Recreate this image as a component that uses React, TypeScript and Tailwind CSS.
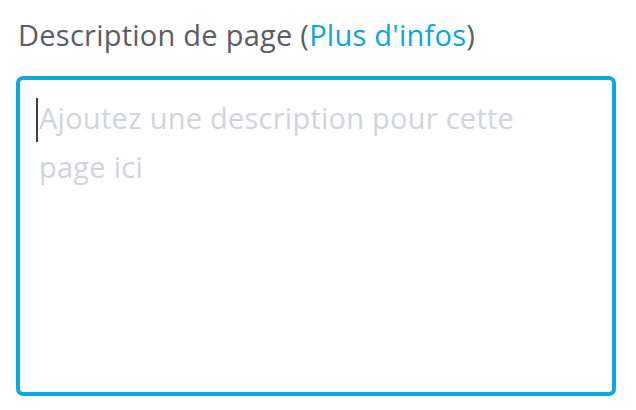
import React from "react";

export default function App() {
  return (
    <div
      className="w-[636px] h-[410px] bg-white overflow-hidden"
      style={{ fontFamily: "'Open Sans', Lato, sans-serif" }}
    >
      <div className="pt-[19px] pl-[18px] text-[29px] leading-[32px] tracking-[0.25px] text-[#5c5d67]">
        Description de page (<a className="text-[#0ba6df]">Plus d'infos</a>)
      </div>
      <div className="mt-[25px] ml-[16px] w-[600px] h-[320px] border-4 border-[#0aa9e2] rounded-[7px] bg-white pt-[13px] pl-[16px]">
        <div className="relative w-[560px] text-[29px] leading-[49px] tracking-[0.25px] text-[#d2d4dc]">
          <span className="absolute left-0 top-[5px] w-[2px] h-[44px] bg-[#3d3d45]" />
          <span className="pl-[3px]">Ajoutez une description pour cette</span>
          <br />
          <span className="pl-[3px]">page ici</span>
        </div>
      </div>
    </div>
  );
}
